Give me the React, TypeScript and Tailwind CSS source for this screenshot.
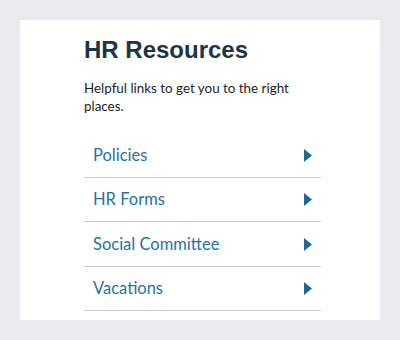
import React from "react";

const items = ["Policies", "HR Forms", "Social Committee", "Vacations"];

export default function App() {
  return (
    <div className="w-[400px] h-[340px] bg-[#e9eaef] pt-[20px] px-[20px]">
      <div className="bg-white h-[300px] pt-[16px] pl-[64px]">
        <div className="w-[237px]">
          <h2
            className="text-[24px] leading-[28px] font-bold text-[#1b3448]"
            style={{ fontFamily: '"Liberation Sans", Arial, sans-serif' }}
          >
            HR Resources
          </h2>
          <p
            className="mt-[15px] text-[13.4px] leading-[18px] text-[#1e1e1e]"
            style={{ fontFamily: 'Lato, "Noto Sans", sans-serif' }}
          >
            Helpful links to get you to the right places.
          </p>
          <ul className="mt-[19px]" style={{ fontFamily: 'Lato, "Noto Sans", sans-serif' }}>
            {items.map((t, i) => (
              <li
                key={t}
                className={`${i === 2 ? "h-[45px]" : "h-[44px]"} border-b border-[#cccccc] flex items-center justify-between pl-[9px] pr-[9px]`}
              >
                <span className="text-[16.5px] text-[#2574a0]">{t}</span>
                <svg width="8" height="13" viewBox="0 0 8 13" className="block">
                  <polygon points="0,0 8,6.5 0,13" fill="#1d6a90" />
                </svg>
              </li>
            ))}
          </ul>
        </div>
      </div>
    </div>
  );
}
